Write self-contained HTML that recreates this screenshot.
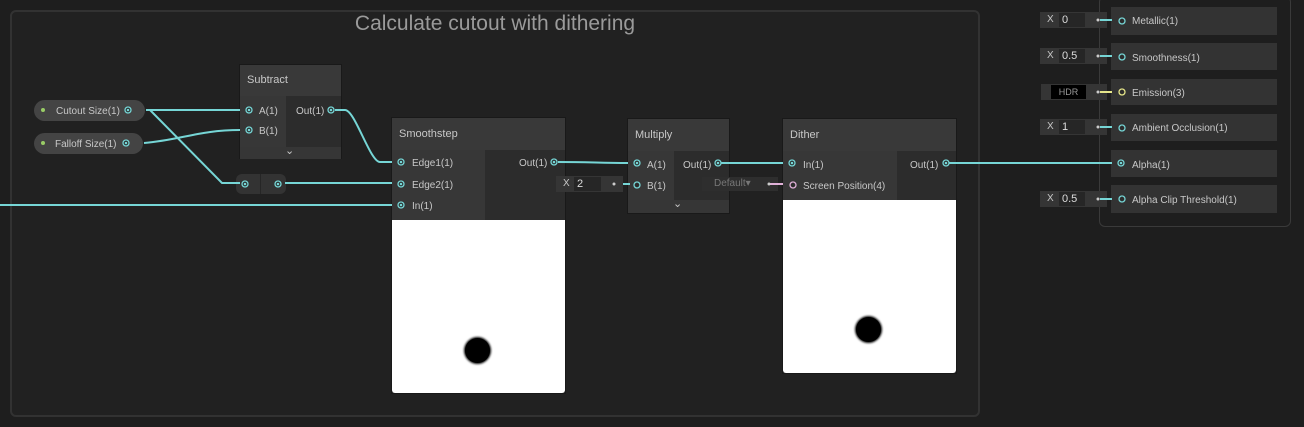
<!DOCTYPE html><html><head><style>
*{margin:0;padding:0;box-sizing:border-box}
body{width:1304px;height:427px;background:#1e1e1e;position:relative;overflow:hidden;font-family:"Liberation Sans",sans-serif;color:#c4c4c4;font-size:10px}
.a{position:absolute}
.grp{left:10px;top:10px;width:970px;height:407px;border:2px solid #323232;border-radius:6px;background:#212121}
.title{left:10px;width:970px;top:12px;text-align:center;font-size:21px;color:#9a9a9a}
.node{position:absolute;background:#2c2c2c;border:1px solid #191919}
.hd{position:absolute;left:0;right:0;top:0;background:#393939;color:#c8c8c8;font-size:11px;padding-left:7px}
.lc{position:absolute;background:#373737}
.t{position:absolute;font-size:10px;color:#c8c8c8;white-space:nowrap}
.pill{position:absolute;background:#444;border-radius:11px;height:21px}
.fld{position:absolute;background:#353535;height:16px}
.inp{position:absolute;background:#262626;height:14px;top:1px;color:#ddd;padding-left:3px;font-size:11px;line-height:14px}
.row{position:absolute;left:1111px;width:166px;background:#333}
</style></head><body>
<div class="a grp"></div>
<div class="a title">Calculate cutout with dithering</div>
<div class="a" style="left:1099px;top:-4px;width:192px;height:231px;border:1px solid #3a3a3a;border-radius:6px"></div>

<!-- pills -->
<div class="pill" style="left:34px;top:100px;width:111px"></div>
<div class="pill" style="left:34px;top:133px;width:109px"></div>
<div class="t" style="left:56px;top:106px">Cutout Size(1)</div>
<div class="t" style="left:55px;top:139px">Falloff Size(1)</div>
<div class="a" style="left:41px;top:108px;width:4px;height:4px;border-radius:2px;background:#9c6"></div>
<div class="a" style="left:41px;top:141px;width:4px;height:4px;border-radius:2px;background:#9c6"></div>

<!-- subtract -->
<div class="node" style="left:239px;top:64px;width:103px;height:95px">
<div class="hd" style="height:31px;line-height:30px">Subtract</div>
<div class="lc" style="left:0;top:31px;width:46px;height:51px"></div>
<div class="lc" style="left:0;top:82px;width:101px;height:12px;background:#363636"></div>
</div>
<div class="t" style="left:259px;top:106px">A(1)</div><div class="t" style="left:259px;top:126px">B(1)</div>
<div class="t" style="left:296px;top:106px">Out(1)</div>
<div class="t" style="left:285px;top:144px;font-size:11px">⌄</div>

<!-- redirect -->
<div class="a" style="left:236px;top:174px;width:50px;height:20px;background:#333;border-radius:6px"></div>
<div class="a" style="left:260px;top:174px;width:1px;height:20px;background:#262626"></div>

<!-- smoothstep -->
<div class="node" style="left:391px;top:117px;width:175px;height:277px">
<div class="hd" style="height:32px;line-height:32px">Smoothstep</div>
<div class="lc" style="left:0;top:32px;width:93px;height:70px"></div>
<div class="a" style="left:0;top:102px;width:173px;height:173px;background:#fff;border-radius:0 0 3px 3px"></div>
</div>
<div class="t" style="left:412px;top:158px">Edge1(1)</div><div class="t" style="left:412px;top:180px">Edge2(1)</div><div class="t" style="left:412px;top:201px">In(1)</div>
<div class="t" style="left:519px;top:158px">Out(1)</div>
<div class="a" style="left:465px;top:338px;width:25px;height:25px;border-radius:50%;background:#000;box-shadow:0 0 2px 1px #000"></div>

<!-- multiply -->
<div class="node" style="left:627px;top:118px;width:103px;height:96px">
<div class="hd" style="height:32px;line-height:32px">Multiply</div>
<div class="lc" style="left:0;top:32px;width:46px;height:49px"></div>
<div class="lc" style="left:0;top:81px;width:101px;height:13px;background:#363636"></div>
</div>
<div class="t" style="left:647px;top:160px">A(1)</div><div class="t" style="left:647px;top:181px">B(1)</div>
<div class="t" style="left:683px;top:160px">Out(1)</div>
<div class="t" style="left:673px;top:197px;font-size:11px">⌄</div>
<div class="fld" style="left:556px;top:176px;width:67px"><span class="t" style="left:7px;top:2px">X</span><div class="inp" style="left:18px;width:27px">2</div></div>
<div class="fld" style="left:702px;top:177px;width:76px;height:14px;background:#2e2e2e"><span class="t" style="left:12px;top:1px;color:#777">Default▾</span></div>

<!-- dither -->
<div class="node" style="left:782px;top:118px;width:175px;height:256px">
<div class="hd" style="height:32px;line-height:32px">Dither</div>
<div class="lc" style="left:0;top:32px;width:114px;height:49px"></div>
<div class="a" style="left:0;top:81px;width:173px;height:173px;background:#fff;border-radius:0 0 3px 3px"></div>
</div>
<div class="t" style="left:803px;top:160px">In(1)</div><div class="t" style="left:803px;top:181px">Screen Position(4)</div>
<div class="t" style="left:910px;top:160px">Out(1)</div>
<div class="a" style="left:856px;top:317px;width:25px;height:25px;border-radius:50%;background:#000;box-shadow:0 0 2px 1px #000"></div>

<!-- master rows -->
<div class="row" style="top:7px;height:28px"></div><div class="t" style="left:1132px;top:16px">Metallic(1)</div>
<div class="row" style="top:43px;height:27px"></div><div class="t" style="left:1132px;top:53px">Smoothness(1)</div>
<div class="row" style="top:79px;height:26px"></div><div class="t" style="left:1132px;top:88px">Emission(3)</div>
<div class="row" style="top:114px;height:27px"></div><div class="t" style="left:1132px;top:123px">Ambient Occlusion(1)</div>
<div class="row" style="top:150px;height:27px"></div><div class="t" style="left:1132px;top:160px">Alpha(1)</div>
<div class="row" style="top:185px;height:28px"></div><div class="t" style="left:1132px;top:195px">Alpha Clip Threshold(1)</div>
<div class="fld" style="left:1040px;top:12px;width:67px"><span class="t" style="left:7px;top:2px">X</span><div class="inp" style="left:19px;width:26px">0</div></div>
<div class="fld" style="left:1040px;top:48px;width:67px"><span class="t" style="left:7px;top:2px">X</span><div class="inp" style="left:19px;width:26px">0.5</div></div>
<div class="fld" style="left:1041px;top:84px;width:66px"><div class="inp" style="left:10px;width:35px;background:#000;color:#999;font-size:9px;text-align:center;padding:0">HDR</div></div>
<div class="fld" style="left:1040px;top:119px;width:67px"><span class="t" style="left:7px;top:2px">X</span><div class="inp" style="left:19px;width:26px">1</div></div>
<div class="fld" style="left:1040px;top:191px;width:67px"><span class="t" style="left:7px;top:2px">X</span><div class="inp" style="left:19px;width:26px">0.5</div></div>

<svg class="a" style="left:0;top:0" width="1304" height="427">
<g fill="none" stroke="#76d6d6" stroke-width="2">
<path d="M146 110 H240"/>
<path d="M144 143 C180 140,200 130,240 130"/>
<path d="M150 110 L222 183 H240"/>
<path d="M285 183 H392"/>
<path d="M0 205 H392"/>
<path d="M335 110 H345 C355 110,370 162,380 162 H392"/>
<path d="M558 162 C590 162,600 163,628 163"/>
<path d="M720 163 H783"/>
<path d="M948 163 H1112"/>
<path d="M623 184 H630"/>
<path d="M1100 20 H1112 M1100 56 H1112 M1100 127 H1112 M1100 199 H1112"/>
</g>
<path d="M770 184 H783" stroke="#e0b0d8" stroke-width="2"/>
<path d="M1100 92 H1112" stroke="#e6e68a" stroke-width="2"/>
<g fill="#262626" stroke="#76d6d6" stroke-width="1.3">
<circle cx="128" cy="110" r="3"/><circle cx="126" cy="143" r="3"/>
<circle cx="249" cy="110" r="3"/><circle cx="249" cy="130" r="3"/><circle cx="331" cy="110" r="3"/>
<circle cx="245" cy="184" r="3"/><circle cx="278" cy="184" r="3"/>
<circle cx="401" cy="162" r="3"/><circle cx="401" cy="184" r="3"/><circle cx="401" cy="205" r="3"/><circle cx="554" cy="162" r="3"/>
<circle cx="637" cy="163" r="3"/><circle cx="718" cy="163" r="3"/>
<circle cx="792" cy="163" r="3"/><circle cx="946" cy="163" r="3"/>
<circle cx="1121" cy="163" r="3"/>
</g>
<g fill="#76d6d6"><circle cx="128" cy="110" r="1.3"/><circle cx="126" cy="143" r="1.3"/><circle cx="249" cy="110" r="1.3"/><circle cx="249" cy="130" r="1.3"/><circle cx="331" cy="110" r="1.3"/><circle cx="245" cy="184" r="1.3"/><circle cx="278" cy="184" r="1.3"/><circle cx="401" cy="162" r="1.3"/><circle cx="401" cy="184" r="1.3"/><circle cx="401" cy="205" r="1.3"/><circle cx="554" cy="162" r="1.3"/><circle cx="637" cy="163" r="1.3"/><circle cx="718" cy="163" r="1.3"/><circle cx="792" cy="163" r="1.3"/><circle cx="946" cy="163" r="1.3"/><circle cx="1121" cy="163" r="1.3"/></g>
<g fill="#2c2c2c" stroke="#76d6d6" stroke-width="1.3">
<circle cx="637" cy="185" r="3"/><circle cx="1122" cy="21" r="3"/><circle cx="1122" cy="57" r="3"/><circle cx="1122" cy="128" r="3"/><circle cx="1122" cy="199" r="3"/>
</g>
<circle cx="793" cy="185" r="3" fill="#2c2c2c" stroke="#e0b0d8" stroke-width="1.3"/>
<circle cx="1122" cy="92" r="3" fill="#2c2c2c" stroke="#e6e68a" stroke-width="1.3"/>
<g fill="#ccc"><circle cx="614" cy="184" r="1.5"/><circle cx="769" cy="184" r="1.5"/><circle cx="1098" cy="20" r="1.5"/><circle cx="1098" cy="56" r="1.5"/><circle cx="1098" cy="92" r="1.5"/><circle cx="1098" cy="127" r="1.5"/><circle cx="1098" cy="199" r="1.5"/></g>
</svg>
</body></html>
